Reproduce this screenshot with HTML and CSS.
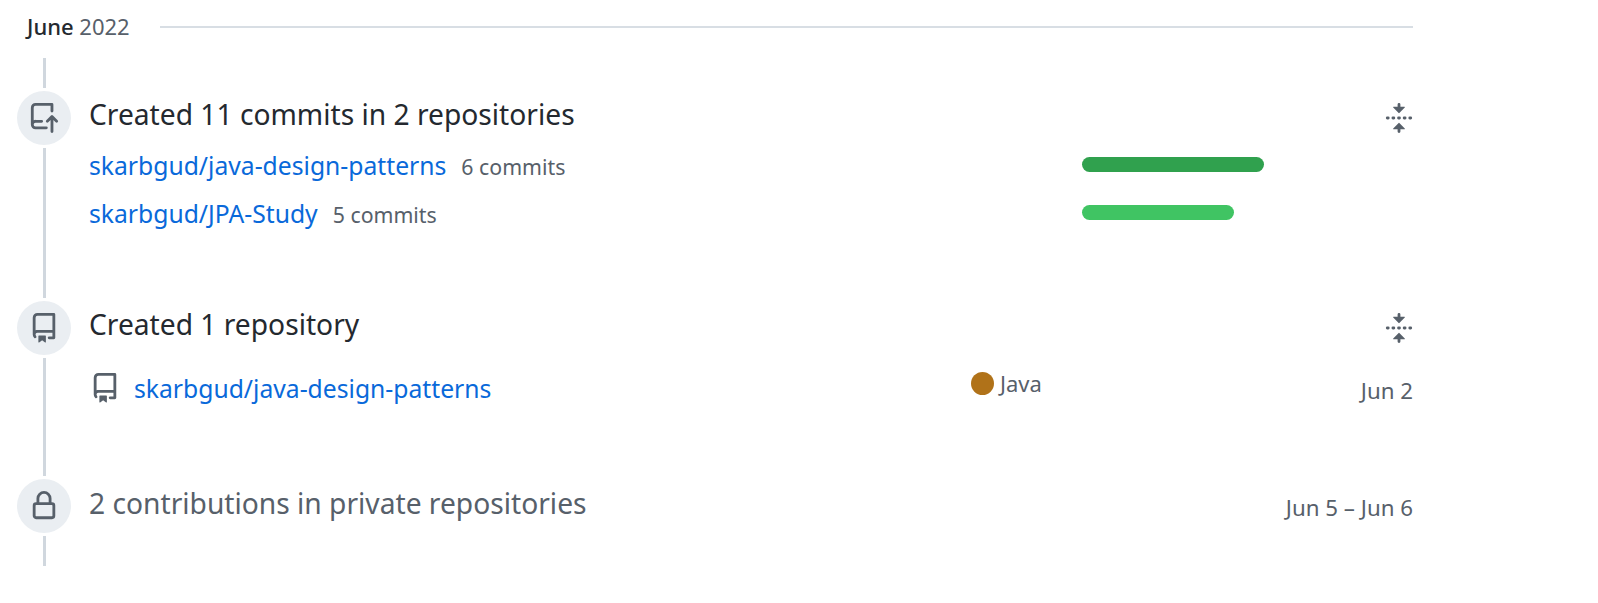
FILE: index.html
```html
<!DOCTYPE html>
<html lang="en">
  <head>
    <meta charset="UTF-8" />
    <meta name="viewport" content="width=device-width, initial-scale=1.0" />
    <title>Contribution activity</title>
    <link rel="stylesheet" href="styles.css">
  </head>
  <body>
    <section class="activity">
      <header class="month">
        <h3 class="month-name">June <span class="month-year">2022</span></h3>
        <div class="month-rule"></div>
      </header>

      <div class="rail-start"></div>

      <article class="event event-commits">
        <div class="rail">
          <div class="badge">
            <svg class="icon" viewBox="0 0 16 16"><path fill-rule="evenodd" d="M1 2.5A2.5 2.5 0 013.5 0h8.75a.75.75 0 01.75.75v3.5a.75.75 0 01-1.5 0V1.5h-8a1 1 0 00-1 1v6.708A2.492 2.492 0 013.5 9h3.25a.75.75 0 010 1.5H3.5a1 1 0 100 2h5.75a.75.75 0 010 1.5H3.5A2.5 2.5 0 011 11.5v-9zm13.23 7.79a.75.75 0 001.06-1.06l-2.505-2.505a.75.75 0 00-1.06 0L9.22 9.229a.75.75 0 001.06 1.061l1.225-1.224v6.184a.75.75 0 001.5 0V9.066l1.224 1.224z"/></svg>
          </div>
          <div class="rail-line"></div>
        </div>
        <div class="event-body">
          <div class="event-head">
            <h4 class="event-title">Created 11 commits in 2 repositories</h4>
            <svg class="icon fold" viewBox="0 0 16 16"><path d="M10.896 2H8.75V.75a.75.75 0 00-1.5 0V2H5.104a.25.25 0 00-.177.427l2.896 2.896a.25.25 0 00.354 0l2.896-2.896A.25.25 0 0010.896 2zM8.75 15.25a.75.75 0 01-1.5 0V14H5.104a.25.25 0 01-.177-.427l2.896-2.896a.25.25 0 01.354 0l2.896 2.896a.25.25 0 01-.177.427H8.75v1.25zm-6.5-6.5a.75.75 0 000-1.5h-.5a.75.75 0 000 1.5h.5zM6 8a.75.75 0 01-.75.75h-.5a.75.75 0 010-1.5h.5A.75.75 0 016 8zm2.25.75a.75.75 0 000-1.5h-.5a.75.75 0 000 1.5h.5zM12 8a.75.75 0 01-.75.75h-.5a.75.75 0 010-1.5h.5A.75.75 0 0112 8zm2.25.75a.75.75 0 000-1.5h-.5a.75.75 0 000 1.5h.5z"/></svg>
          </div>
          <div class="commit-list">
            <div class="commit-row">
              <div class="commit-info">
                <a class="repo-link" href="#">skarbgud/java-design-patterns</a>
                <span class="commit-count">6 commits</span>
              </div>
              <div class="bar bar-dark" style="width: 182px"></div>
            </div>
            <div class="commit-row">
              <div class="commit-info">
                <a class="repo-link" href="#">skarbgud/JPA-Study</a>
                <span class="commit-count">5 commits</span>
              </div>
              <div class="bar bar-light" style="width: 152px"></div>
            </div>
          </div>
        </div>
      </article>

      <article class="event event-repo">
        <div class="rail">
          <div class="badge">
            <svg class="icon" viewBox="0 0 16 16"><path fill-rule="evenodd" d="M2 2.5A2.5 2.5 0 014.5 0h8.75a.75.75 0 01.75.75v12.5a.75.75 0 01-.75.75h-2.5a.75.75 0 110-1.5h1.75v-2h-8a1 1 0 00-.714 1.7.75.75 0 01-1.072 1.05A2.495 2.495 0 012 11.5v-9zm10.5-1V9h-8c-.356 0-.694.074-1 .208V2.5a1 1 0 011-1h8zM5 12.25v3.25a.25.25 0 00.4.2l1.45-1.087a.25.25 0 01.3 0L8.6 15.7a.25.25 0 00.4-.2v-3.25a.25.25 0 00-.25-.25h-3.5a.25.25 0 00-.25.25z"/></svg>
          </div>
          <div class="rail-line"></div>
        </div>
        <div class="event-body">
          <div class="event-head">
            <h4 class="event-title">Created 1 repository</h4>
            <svg class="icon fold" viewBox="0 0 16 16"><path d="M10.896 2H8.75V.75a.75.75 0 00-1.5 0V2H5.104a.25.25 0 00-.177.427l2.896 2.896a.25.25 0 00.354 0l2.896-2.896A.25.25 0 0010.896 2zM8.75 15.25a.75.75 0 01-1.5 0V14H5.104a.25.25 0 01-.177-.427l2.896-2.896a.25.25 0 01.354 0l2.896 2.896a.25.25 0 01-.177.427H8.75v1.25zm-6.5-6.5a.75.75 0 000-1.5h-.5a.75.75 0 000 1.5h.5zM6 8a.75.75 0 01-.75.75h-.5a.75.75 0 010-1.5h.5A.75.75 0 016 8zm2.25.75a.75.75 0 000-1.5h-.5a.75.75 0 000 1.5h.5zM12 8a.75.75 0 01-.75.75h-.5a.75.75 0 010-1.5h.5A.75.75 0 0112 8zm2.25.75a.75.75 0 000-1.5h-.5a.75.75 0 000 1.5h.5z"/></svg>
          </div>
          <div class="repo-row">
            <div class="repo-name">
              <svg class="icon" viewBox="0 0 16 16"><path fill-rule="evenodd" d="M2 2.5A2.5 2.5 0 014.5 0h8.75a.75.75 0 01.75.75v12.5a.75.75 0 01-.75.75h-2.5a.75.75 0 110-1.5h1.75v-2h-8a1 1 0 00-.714 1.7.75.75 0 01-1.072 1.05A2.495 2.495 0 012 11.5v-9zm10.5-1V9h-8c-.356 0-.694.074-1 .208V2.5a1 1 0 011-1h8zM5 12.25v3.25a.25.25 0 00.4.2l1.45-1.087a.25.25 0 01.3 0L8.6 15.7a.25.25 0 00.4-.2v-3.25a.25.25 0 00-.25-.25h-3.5a.25.25 0 00-.25.25z"/></svg>
              <a class="repo-link" href="#">skarbgud/java-design-patterns</a>
            </div>
            <div class="lang"><span class="lang-dot"></span>Java</div>
            <time class="date">Jun 2</time>
          </div>
        </div>
      </article>

      <article class="event event-private">
        <div class="rail">
          <div class="badge">
            <svg class="icon" viewBox="0 0 16 16"><path fill-rule="evenodd" d="M4 4v2h-.25A1.75 1.75 0 002 7.75v5.5c0 .966.784 1.75 1.75 1.75h8.5A1.75 1.75 0 0014 13.25v-5.5A1.75 1.75 0 0012.25 6H12V4a4 4 0 10-8 0zm6.5 2V4a2.5 2.5 0 00-5 0v2h5zM12 7.5h.25a.25.25 0 01.25.25v5.5a.25.25 0 01-.25.25h-8.5a.25.25 0 01-.25-.25v-5.5a.25.25 0 01.25-.25H12z"/></svg>
          </div>
          <div class="rail-line"></div>
        </div>
        <div class="event-body">
          <div class="event-head">
            <h4 class="event-title event-title-muted">2 contributions in private repositories</h4>
            <time class="date">Jun 5 – Jun 6</time>
          </div>
        </div>
      </article>
    </section>
  </body>
</html>
```

FILE: styles.css
```css
html {
  box-sizing: border-box;
  font-family: "Noto Sans", "Open Sans", sans-serif;
  font-size: 16px;
}

*,
*:before,
*:after {
  box-sizing: inherit;
}

body {
  margin: 0;
  background-color: #fff;
  color: #24292f;
}

a {
  text-decoration: none;
}

.activity {
  width: 1413px;
  padding-left: 17px;
}

.month {
  display: flex;
  align-items: center;
  height: 54px;
  padding-left: 10px;
}

.month-name {
  margin: 0 0 2px;
  font-size: 22px;
  font-weight: 500;
  line-height: 52px;
}

.month-year {
  color: #57606a;
  font-weight: 400;
}

.month-rule {
  flex-grow: 1;
  height: 2px;
  margin-left: 30px;
  background-color: #d8dee4;
}

.rail-start {
  width: 3px;
  height: 30px;
  margin: 4px 0 3px 26px;
  background-color: #d0d7de;
}

.event {
  display: flex;
}

.event-commits {
  height: 210px;
}

.event-repo {
  height: 178px;
}

.event-private {
  height: 87px;
}

.rail {
  display: flex;
  flex-direction: column;
  align-items: center;
  flex-shrink: 0;
  width: 54px;
  padding-bottom: 3px;
}

.badge {
  display: flex;
  align-items: center;
  justify-content: center;
  flex-shrink: 0;
  width: 54px;
  height: 54px;
  border-radius: 50%;
  background-color: #eaeef2;
}

.rail-line {
  flex-grow: 1;
  width: 3px;
  margin-top: 3px;
  background-color: #d0d7de;
}

.event-private .rail {
  padding-bottom: 0;
}

.icon {
  display: block;
  flex-shrink: 0;
  width: 30px;
  height: 30px;
  fill: #57606a;
}

.event-body {
  flex-grow: 1;
  margin-left: 18px;
}

.event-head {
  display: flex;
  justify-content: space-between;
  align-items: flex-start;
}

.event-title {
  margin: 0;
  font-size: 28.2px;
  font-weight: 400;
  line-height: 46px;
}

.event-title-muted {
  margin-top: 1px;
  color: #57606a;
}

.fold {
  margin-top: 12px;
  margin-right: -1px;
}

.commit-list {
  padding-top: 4px;
}

.commit-row {
  display: grid;
  grid-template-columns: 993px 1fr;
  align-items: center;
  height: 48px;
}

.commit-info {
  display: flex;
  align-items: baseline;
}

.repo-link {
  color: #0969da;
  font-size: 24.7px;
}

.commit-count {
  margin-left: 15px;
  color: #57606a;
  font-size: 21.3px;
}

.bar {
  height: 15px;
  margin-bottom: 2px;
  border-radius: 8px;
}

.bar-dark {
  background-color: #30a14e;
}

.bar-light {
  background-color: #40c463;
}

.repo-row {
  display: grid;
  grid-template-columns: 882px 1fr auto;
  align-items: center;
  height: 82px;
}

.repo-name {
  display: flex;
  align-items: center;
  gap: 14px;
}

.repo-name .icon {
  margin-left: 1px;
}

.lang {
  display: flex;
  align-items: center;
  gap: 6px;
  margin-bottom: 10px;
  color: #57606a;
  font-size: 22px;
}

.lang-dot {
  width: 23px;
  height: 23px;
  border-radius: 50%;
  background-color: #b07219;
}

.date {
  margin-top: 4px;
  color: #57606a;
  font-size: 22.3px;
}

.event-private .date {
  margin-top: 13px;
}
```
